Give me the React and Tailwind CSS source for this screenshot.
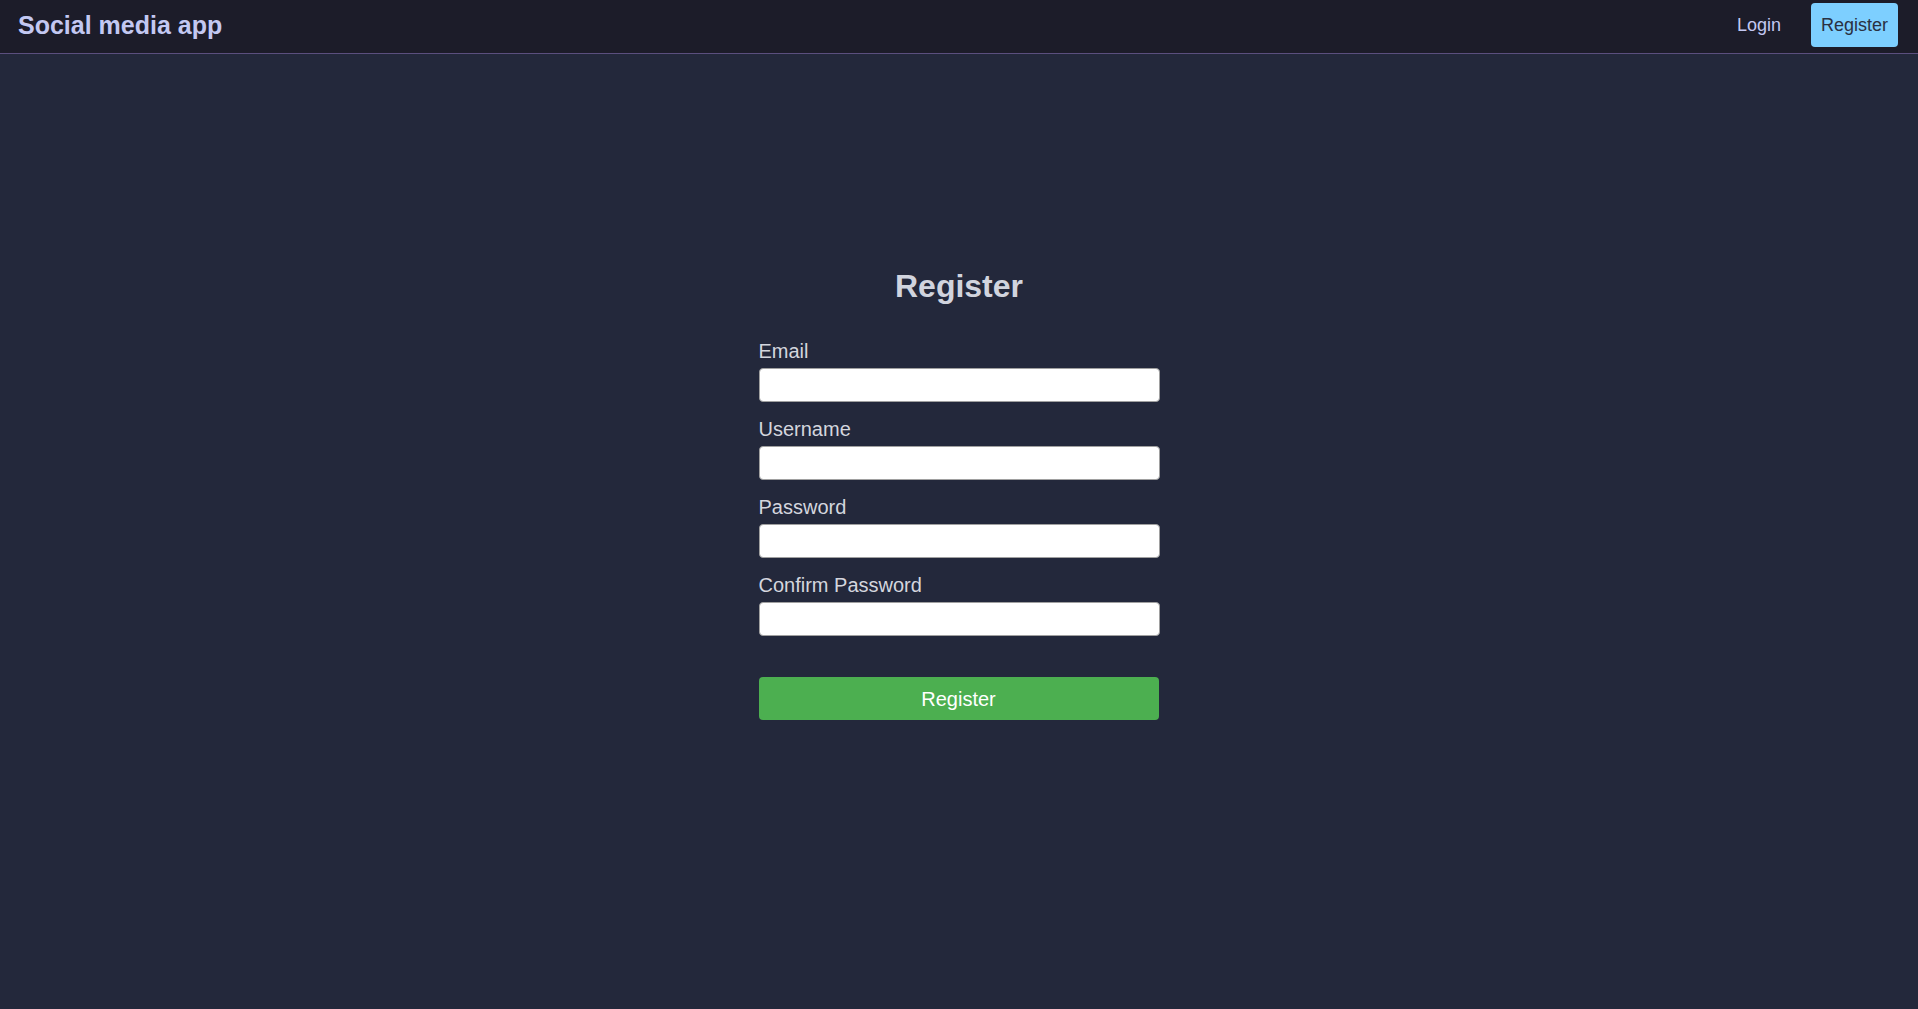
export default function App() {
  const fields = [
    { label: "Email", type: "email" },
    { label: "Username", type: "text" },
    { label: "Password", type: "password" },
    { label: "Confirm Password", type: "password" },
  ];
  return (
    <div
      className="min-h-screen bg-[#23283b]"
      style={{ fontFamily: '"Liberation Sans", Arial, sans-serif' }}
    >
      <nav className="h-[54px] border-b border-[#5b4f7e] bg-[#1c1c29] flex items-center justify-between pl-[18px] pr-[20px] pb-[3px]">
        <div className="text-[25px] font-bold leading-[29px] text-[#c3c8f2]">Social media app</div>
        <div className="flex items-center">
          <a className="text-[18px] leading-[21px] text-[#c3c8f2] px-[10px] cursor-pointer">Login</a>
          <button className="ml-[20px] h-[44px] px-[10px] rounded-[4px] bg-[#7dcfff] text-[18px] text-[#2a3142]">
            Register
          </button>
        </div>
      </nav>
      <main className="flex flex-col items-center pt-[214px]">
        <h2 className="text-[32px] leading-[37px] font-bold text-[#d1d4de]">Register</h2>
        <form className="w-[401px] mt-[35px] flex flex-col" onSubmit={(e) => e.preventDefault()}>
          <div className="flex flex-col gap-[16px]">
            {fields.map((f) => (
              <div key={f.label} className="flex flex-col">
                <label className="text-[20px] leading-[23px] text-[#d4d6de]">{f.label}</label>
                <input
                  type={f.type}
                  className="mt-[5px] h-[34px] w-full bg-white rounded-[4px] border border-[#a0a0a0] outline-none px-2"
                />
              </div>
            ))}
          </div>
          <button
            type="submit"
            className="mt-[41px] w-[400px] h-[43px] bg-[#4caf50] rounded-[4px] text-white text-[20px]"
          >
            Register
          </button>
        </form>
      </main>
    </div>
  );
}
